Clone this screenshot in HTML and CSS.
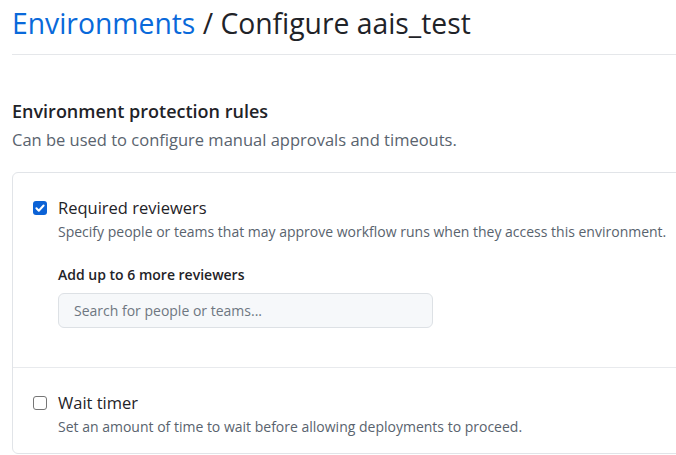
FILE: index.html
```html
<!DOCTYPE html>
<html>
<head>
<meta charset="utf-8">
<link rel="stylesheet" href="styles.css">
</head>
<body>
<div class="page">
  <div class="subhead">
    <h1 class="subhead-title"><a href="#" class="crumb">Environments</a> / Configure aais_test</h1>
  </div>
  <section class="rules">
    <h2 class="rules-title">Environment protection rules</h2>
    <p class="rules-desc">Can be used to configure manual approvals and timeouts.</p>
    <div class="box">
      <div class="box-row">
        <label class="check">
          <span class="cb cb-checked"><svg viewBox="0 0 14 14" width="14" height="14"><path d="M3.4 7.3l2.4 2.4 4.8-5.2" fill="none" stroke="#fff" stroke-width="2" stroke-linecap="round" stroke-linejoin="round"/></svg></span>
          <span class="check-text">
            <span class="check-title">Required reviewers</span>
            <span class="check-desc">Specify people or teams that may approve workflow runs when they access this environment.</span>
          </span>
        </label>
        <div class="reviewers">
          <div class="field-label">Add up to 6 more reviewers</div>
          <input class="search" type="text" placeholder="Search for people or teams...">
        </div>
      </div>
      <div class="box-row box-row-last">
        <label class="check">
          <span class="cb"></span>
          <span class="check-text">
            <span class="check-title">Wait timer</span>
            <span class="check-desc">Set an amount of time to wait before allowing deployments to proceed.</span>
          </span>
        </label>
      </div>
    </div>
  </section>
</div>
</body>
</html>
```
FILE: styles.css
```css
html, body {
  margin: 0;
  padding: 0;
  background: #fff;
  overflow: hidden;
}
body {
  font-family: "Open Sans", "Noto Sans", sans-serif;
  color: #1f2328;
}
.page {
  width: 700px;
  padding-left: 12px;
}
.subhead {
  border-bottom: 1px solid #e5e7ea;
  height: 55px;
  box-sizing: border-box;
}
.subhead-title {
  margin: 0;
  padding-top: 3px;
  font-size: 28.3px;
  font-weight: 400;
  line-height: 40px;
  color: #1f2328;
}
.crumb {
  color: #0969da;
  text-decoration: none;
}
.rules {
  padding-top: 42px;
}
.rules-title {
  margin: 0;
  font-size: 18px;
  font-weight: 600;
  line-height: 28px;
}
.rules-desc {
  margin: 3px 0 0;
  font-size: 16.5px;
  line-height: 24px;
  color: #59636e;
}
.box {
  margin-top: 20px;
  border: 1px solid #e1e4e8;
  border-radius: 6px;
  height: 282px;
  box-sizing: border-box;
}
.box-row {
  padding: 25px 20px 0;
  height: 195px;
  box-sizing: border-box;
  border-bottom: 1px solid #e8eaed;
}
.box-row-last {
  border-bottom: 0;
  height: auto;
}
.check {
  display: flex;
  gap: 11px;
  align-items: flex-start;
}
.cb {
  flex: none;
  width: 14px;
  height: 14px;
  margin-top: 3px;
  border: 1px solid #767676;
  border-radius: 3px;
  box-sizing: border-box;
  display: flex;
  align-items: center;
  justify-content: center;
  background: #fff;
}
.cb-checked {
  border: 0;
  background: #0b62d6;
}
.check-text {
  display: flex;
  flex-direction: column;
}
.check-title {
  font-size: 16.5px;
  line-height: 20px;
  font-weight: 500;
}
.check-desc {
  margin-top: 4px;
  font-size: 14px;
  line-height: 20px;
  color: #59636e;
}
.reviewers {
  padding-left: 25px;
  margin-top: 23px;
}
.field-label {
  font-size: 14px;
  font-weight: 600;
  line-height: 20px;
}
.search {
  display: block;
  margin-top: 8px;
  width: 375px;
  height: 35px;
  box-sizing: border-box;
  border: 1px solid #dde1e5;
  border-radius: 6px;
  background: #f6f8fa;
  padding: 0 15px;
  font-family: inherit;
  font-size: 14px;
  color: #1f2328;
}
.search::placeholder {
  color: #6e7781;
}
```
